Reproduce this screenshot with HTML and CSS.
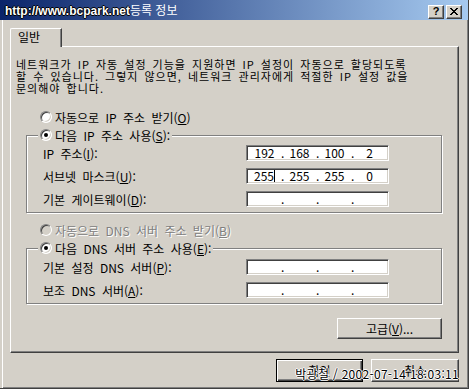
FILE: index.html
```html
<!DOCTYPE html>
<html lang="ko">
<head>
    <meta charset="UTF-8">
    <title>등록 정보</title>
    <link rel="stylesheet" href="styles.css">
</head>
<body>

<div class="window">
    <div class="titlebar">
        <span class="title"><span class="site">http://www.bcpark.net</span>등록 정보</span>
        <div class="caption-btns">
            <span class="cap-btn">?</span>
            <span class="cap-btn">
                <svg width="8" height="7" viewBox="0 0 8 7" shape-rendering="crispEdges">
                    <path d="M0 0h2v1h-2zM1 1h2v1h-2zM2 2h2v1h-2zM3 3h2v1h-2zM2 4h2v1h-2zM1 5h2v1h-2zM0 6h2v1h-2zM6 0h2v1h-2zM5 1h2v1h-2zM4 2h2v1h-2zM4 4h2v1h-2zM5 5h2v1h-2zM6 6h2v1h-2z" fill="#000"/>
                </svg>
            </span>
        </div>
    </div>

    <div class="dialog-body">
        <div class="tabs">
            <div class="tab">일반</div>
        </div>

        <div class="panel">
            <p class="intro">네트워크가 IP 자동 설정 기능을 지원하면 IP 설정이 자동으로 할당되도록<br>할 수 있습니다. 그렇지 않으면, 네트워크 관리자에게 적절한 IP 설정 값을<br>문의해야 합니다.</p>

            <div class="option option-top"><span class="radio"></span><span>자동으로 IP 주소 받기(<u>O</u>)</span></div>

            <!-- manual IP -->
            <fieldset class="group">
                <legend class="option"><span class="radio checked"></span><span>다음 IP 주소 사용(<u>S</u>):</span></legend>
                <div class="field-row">
                    <span class="field-label">IP 주소(<u>I</u>):</span>
                    <div class="ipbox"><span class="seg">192</span><span class="dot">.</span><span class="seg">168</span><span class="dot">.</span><span class="seg">100</span><span class="dot">.</span><span class="seg">2</span></div>
                </div>
                <div class="field-row">
                    <span class="field-label">서브넷 마스크(<u>U</u>):</span>
                    <div class="ipbox"><span class="seg">255<span class="caret"></span></span><span class="dot">.</span><span class="seg">255</span><span class="dot">.</span><span class="seg">255</span><span class="dot">.</span><span class="seg">0</span></div>
                </div>
                <div class="field-row">
                    <span class="field-label">기본 게이트웨이(<u>D</u>):</span>
                    <div class="ipbox"><span class="seg"></span><span class="dot">.</span><span class="seg"></span><span class="dot">.</span><span class="seg"></span><span class="dot">.</span><span class="seg"></span></div>
                </div>
            </fieldset>

            <div class="option option-dns disabled"><span class="radio"></span><span>자동으로 DNS 서버 주소 받기(<u>B</u>)</span></div>

            <!-- manual DNS -->
            <fieldset class="group group-dns">
                <legend class="option"><span class="radio checked"></span><span>다음 DNS 서버 주소 사용(<u>E</u>):</span></legend>
                <div class="field-row">
                    <span class="field-label">기본 설정 DNS 서버(<u>P</u>):</span>
                    <div class="ipbox"><span class="seg"></span><span class="dot">.</span><span class="seg"></span><span class="dot">.</span><span class="seg"></span><span class="dot">.</span><span class="seg"></span></div>
                </div>
                <div class="field-row">
                    <span class="field-label">보조 DNS 서버(<u>A</u>):</span>
                    <div class="ipbox"><span class="seg"></span><span class="dot">.</span><span class="seg"></span><span class="dot">.</span><span class="seg"></span><span class="dot">.</span><span class="seg"></span></div>
                </div>
            </fieldset>

            <div class="adv-row">
                <button type="button" class="btn btn-adv">고급(<u>V</u>)...</button>
            </div>
        </div>

        <div class="dialog-btns">
            <button type="button" class="btn btn-default">확인</button>
            <button type="button" class="btn">취소</button>
        </div>
    </div>

    <div class="stamp">박광철 / 2002-07-14 18:03:11</div>
</div>

</body>
</html>
```

FILE: styles.css
```css
body {
    margin: 0;
    font-family: "Noto Sans CJK KR", "Liberation Sans", sans-serif;
    font-size: 12px;
    color: #000;
}
.window {
    position: relative;
    width: 469px;
    height: 389px;
    box-sizing: border-box;
    background: #d4d0c8;
    border-right: 1px solid #404040;
    border-bottom: 1px solid #404040;
    box-shadow: inset 2px 0 #d4d0c8, inset 3px 0 #fff, inset -1px -1px #808080;
}

/* title bar */
.titlebar {
    height: 20px;
    display: flex;
    align-items: center;
    justify-content: space-between;
    background: linear-gradient(to right, #0a246a, #a6caf0);
    color: #fff;
    padding: 0 6px 0 5px;
}
.title {
    font-size: 12px;
    line-height: 14px;
    white-space: nowrap;
}
.site {
    font-family: "Liberation Sans", sans-serif;
    font-weight: bold;
    color: #fff;
    text-shadow: 1px 0 #000, -1px 0 #000, 0 1px #000, 0 -1px #000;
}
.caption-btns {
    display: flex;
    gap: 2px;
    margin-top: 3px;
}
.cap-btn {
    width: 16px;
    height: 14px;
    box-sizing: border-box;
    display: flex;
    align-items: center;
    justify-content: center;
    background: #d4d0c8;
    border: 1px solid;
    border-color: #fff #404040 #404040 #fff;
    box-shadow: inset -1px -1px #808080;
    color: #000;
    font-family: "Liberation Sans", sans-serif;
    font-weight: bold;
    font-size: 11px;
    line-height: 11px;
}

/* body */
.dialog-body {
    padding: 8px 9px 0 10px;
}
.tabs {
    display: flex;
    height: 18px;
    align-items: flex-start;
}
.tab {
    position: relative;
    z-index: 1;
    width: 52px;
    height: 19px;
    box-sizing: border-box;
    background: #d4d0c8;
    border-top: 1px solid #fff;
    border-left: 1px solid #fff;
    border-right: 1px solid #404040;
    border-top-left-radius: 2px;
    box-shadow: inset -1px 0 #808080;
    padding-left: 7px;
    line-height: 16px;
}
.panel {
    height: 307px;
    box-sizing: border-box;
    border: 1px solid;
    border-color: #fff #404040 #404040 #fff;
    box-shadow: inset -1px -1px #808080;
    padding: 11px 16px 0 5px;
}
.intro {
    margin: 0;
    font-size: 11px;
    letter-spacing: 1px;
    line-height: 12px;
    white-space: nowrap;
    word-spacing: 2px;
}

/* radio options */
.option {
    display: flex;
    align-items: center;
    gap: 3px;
    height: 14px;
    white-space: nowrap;
    word-spacing: 3px;
}
.option-top {
    margin: 16px 0 0 24px;
}
.option-dns {
    margin: 10px 0 0 24px;
}
.disabled {
    color: #808080;
    text-shadow: 1px 1px #fff;
}
.radio {
    width: 12px;
    height: 12px;
    box-sizing: border-box;
    border-radius: 50%;
    background: #fff;
    border: 1px solid;
    border-color: #808080 #fff #fff #808080;
    box-shadow: inset 1px 1px #404040, inset -1px -1px #d4d0c8;
    display: flex;
    align-items: center;
    justify-content: center;
}
.disabled .radio {
    background: #d4d0c8;
}
.radio.checked::after {
    content: "";
    width: 4px;
    height: 4px;
    border-radius: 50%;
    background: #000;
}

/* group boxes */
.group {
    margin: 4px 0 0 10px;
    padding: 3px 16px 5px 16px;
    border: 1px solid #808080;
    box-shadow: 1px 1px #fff, inset 1px 1px #fff;
    display: flex;
    flex-direction: column;
    gap: 7px;
}
.group-dns {
    padding-top: 4px;
}
.group legend {
    margin-left: -5px;
    padding: 0 2px;
    background: #d4d0c8;
}
.field-row {
    display: flex;
    align-items: center;
    height: 16px;
}
.field-label {
    width: 203px;
    white-space: nowrap;
    word-spacing: 3px;
}
.ipbox {
    width: 143px;
    height: 16px;
    box-sizing: border-box;
    display: flex;
    background: #fff;
    border: 1px solid;
    border-color: #808080 #fff #fff #808080;
    box-shadow: inset 1px 1px #404040, inset -1px -1px #d4d0c8;
    padding: 1px 2px 0 1px;
    line-height: 12px;
}
.seg {
    flex: 1;
    text-align: center;
}
.dot {
    width: 2px;
    text-align: center;
}
.caret {
    display: inline-block;
    width: 1px;
    height: 12px;
    background: #000;
    vertical-align: top;
}

/* buttons */
.btn {
    font-family: inherit;
    font-size: 12px;
    color: #000;
    background: #d4d0c8;
    border: 1px solid;
    border-color: #fff #404040 #404040 #fff;
    box-shadow: inset -1px -1px #808080;
    padding: 0;
    height: 23px;
    width: 87px;
    word-spacing: 3px;
}
.btn-default {
    border-color: #000;
    box-shadow: inset 1px 1px #fff, inset -1px -1px #404040, inset -2px -2px #808080;
}
.adv-row {
    display: flex;
    justify-content: flex-end;
    margin-top: 14px;
}
.btn-adv {
    width: 105px;
    height: 21px;
}
.dialog-btns {
    display: flex;
    justify-content: flex-end;
    gap: 8px;
    margin-top: 6px;
}
.dialog-btns .btn:last-child {
    width: 88px;
}

/* watermark over the buttons */
.stamp {
    position: absolute;
    right: 9px;
    bottom: 7px;
    white-space: nowrap;
    line-height: 14px;
    letter-spacing: 0.3px;
    text-shadow: 1px 0 #fff, -1px 0 #fff, 0 1px #fff, 0 -1px #fff;
}
```
